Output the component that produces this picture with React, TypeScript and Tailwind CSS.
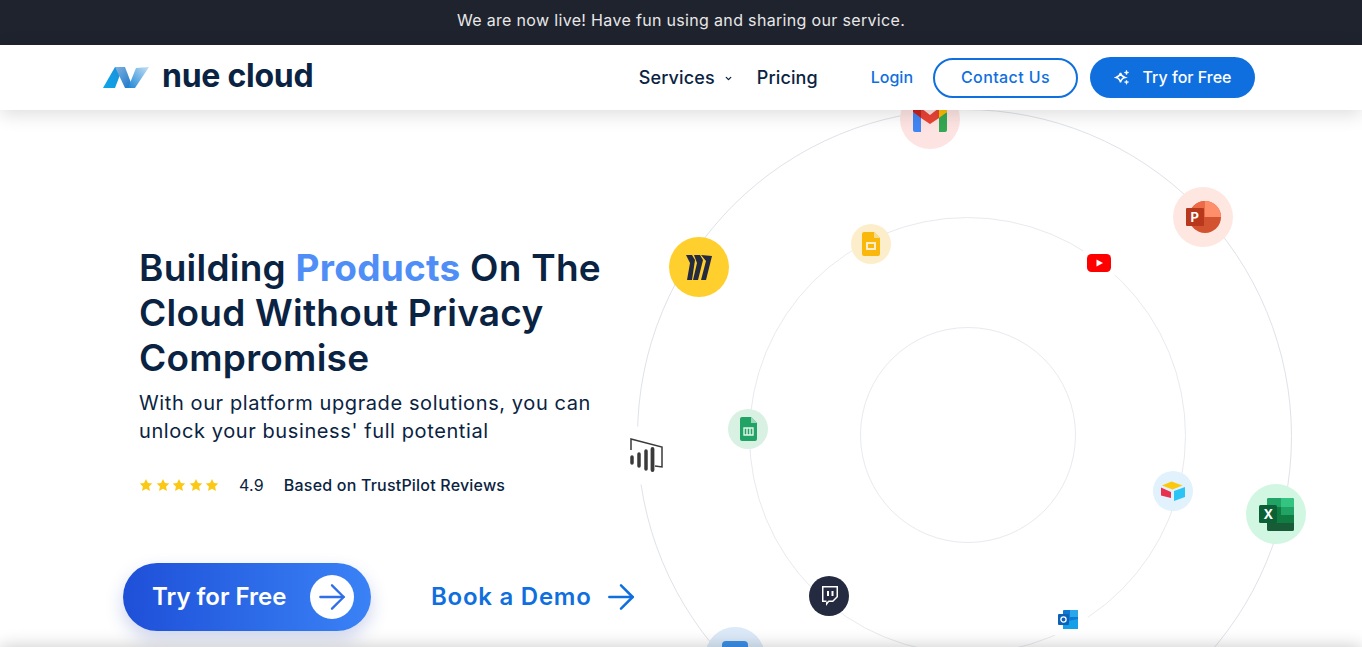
import { ArrowRight, ChevronDown } from 'lucide-react';

const FONT = "font-['Inter','Liberation_Sans',sans-serif]";

function LogoMark() {
  return (
    <svg width="46" height="22" viewBox="0 0 46 22">
      <defs>
        <linearGradient id="lm1" x1="0" y1="1" x2="1" y2="0">
          <stop offset="0" stopColor="#0ea5e9" />
          <stop offset="1" stopColor="#1b8fd8" />
        </linearGradient>
        <linearGradient id="lm2" x1="0" y1="0" x2="1" y2="1">
          <stop offset="0" stopColor="#7fb2e0" />
          <stop offset="1" stopColor="#1673c8" />
        </linearGradient>
        <linearGradient id="lm3" x1="0" y1="1" x2="1" y2="0">
          <stop offset="0" stopColor="#1c86d6" />
          <stop offset="1" stopColor="#c4e0f5" />
        </linearGradient>
      </defs>
      <path d="M0 21 L12 0 L20 0 L12 21 Z" fill="url(#lm1)" />
      <path d="M12 0 L22 0 L30 21 L22 21 Z" fill="url(#lm2)" />
      <path d="M25 21 L33 1 L46 0 L32 21 Z" fill="url(#lm3)" />
    </svg>
  );
}

function Sparkle() {
  return (
    <svg width="16" height="16" viewBox="0 0 16 16" fill="none" stroke="white" strokeWidth="1.5">
      <path d="M6.500 4 C7 6.500 8 7.500 11 8.500 C8 9.200 7 10.500 6.500 13.500 C6 10.500 5 9.200 2 8.500 C5 7.500 6 6.500 6.500 4 Z" />
      <path d="M12.500 1 L13.200 3 L15 3.500 L13.200 4.200 L12.500 6 L11.800 4.200 L10 3.500 L11.800 3 Z" fill="white" strokeWidth="0.4" />
      <path d="M12.500 11 L13.200 12.500 L14.800 13 L13.200 13.700 L12.500 15.500 L11.800 13.700 L10.200 13 L11.800 12.500 Z" fill="white" strokeWidth="0.4" />
    </svg>
  );
}

function Star() {
  return (
    <svg width="14" height="14" viewBox="0 0 24 24" fill="#fbc814">
      <path d="M12 1.500 L15.300 8.400 L22.800 9.400 L17.300 14.600 L18.700 22.100 L12 18.500 L5.300 22.100 L6.700 14.600 L1.200 9.400 L8.700 8.400 Z" />
    </svg>
  );
}

function Gmail() {
  return (
    <svg width="34" height="26" viewBox="0 0 34 26">
      <path d="M0 6 V24 a2 2 0 0 0 2 2 H8 V10 Z" fill="#4285f4" />
      <path d="M26 10 V26 H32 a2 2 0 0 0 2 -2 V6 Z" fill="#34a853" />
      <path d="M0 0 V6 L8 12 V2 Z" fill="#c5221f" />
      <path d="M8 2 L17 9 L26 2 V12 L17 18 L8 12 Z" fill="#ea4335" />
      <path d="M26 2 V12 L34 6 V0 Z" fill="#fbbc04" />
    </svg>
  );
}

function Slides() {
  return (
    <svg width="18" height="24" viewBox="0 0 18 24">
      <path d="M2 0 H12 L18 6 V22 a2 2 0 0 1 -2 2 H2 a2 2 0 0 1 -2 -2 V2 a2 2 0 0 1 2 -2 Z" fill="#fbb80c" />
      <path d="M12 0 L18 6 H12 Z" fill="#f8dc8e" />
      <rect x="5" y="11" width="8" height="6" fill="#fbb80c" stroke="#fdeecb" strokeWidth="2" />
    </svg>
  );
}

function Sheets() {
  return (
    <svg width="17" height="24" viewBox="0 0 17 24">
      <path d="M2 0 H11 L17 6 V22 a2 2 0 0 1 -2 2 H2 a2 2 0 0 1 -2 -2 V2 a2 2 0 0 1 2 -2 Z" fill="#21a366" />
      <path d="M11 0 L17 6 H11 Z" fill="#9ad9b8" />
      <path d="M4 11 H13 V18 H4 Z M7 11 V18 M10 11 V18" fill="none" stroke="#e3f5ea" strokeWidth="1.400" />
    </svg>
  );
}

function Miro() {
  return (
    <svg width="26" height="27" viewBox="0 0 26 27" fill="#242a40">
      <path d="M0 1 L6 1 L9 6 L6 26 L1 26 L4 9 Z" />
      <path d="M8 1 L14 1 L17 6 L12 26 L7 26 L11 9 Z" />
      <path d="M15 1 L26 2 L20 26 L15 26 L20 7 Z" />
    </svg>
  );
}

function PowerPoint() {
  return (
    <svg width="35" height="32" viewBox="0 0 35 32">
      <circle cx="19" cy="16" r="16" fill="#d35230" />
      <path d="M19 0 A16 16 0 0 1 35 16 H19 Z" fill="#ff8f6b" />
      <path d="M19 0 A16 16 0 0 0 3 16 H19 Z" fill="#ed6c47" />
      <rect x="0" y="7" width="18" height="18" rx="1" fill="#b7381a" />
      <text x="4.500" y="21" fontSize="13" fontWeight="700" fill="#fff" fontFamily="Inter, sans-serif">P</text>
    </svg>
  );
}

function YouTube() {
  return (
    <svg width="24" height="18" viewBox="0 0 24 18">
      <rect width="24" height="18" rx="4.500" fill="#ff0000" />
      <path d="M9.500 5.500 L16 9 L9.500 12.500 Z" fill="#fff" />
    </svg>
  );
}

function PowerBI() {
  return (
    <svg width="36" height="36" viewBox="0 0 36 36" fill="none">
      <path d="M2 13 V2 L33 10 V30 L26 29" stroke="#3a3a3a" strokeWidth="1.500" />
      <g stroke="#3a3a3a" strokeLinecap="round">
        <path d="M3 20 V26" strokeWidth="3.500" />
        <path d="M10 17 V29" strokeWidth="3.500" />
        <path d="M17 14 V32" strokeWidth="3.500" />
        <path d="M23.500 12 V33" strokeWidth="3.800" />
      </g>
    </svg>
  );
}

function Airtable() {
  return (
    <svg width="24" height="20" viewBox="0 0 24 20">
      <path d="M10.500 0.500 L21.500 4.500 L11.500 8.500 L1 4.500 Z" fill="#fcc80f" />
      <path d="M13 10 L24 6 V16 L13 20 Z" fill="#2cc4f4" />
      <path d="M0 6.500 L10 11 V17 L0 14.500 Z" fill="#e8304f" />
    </svg>
  );
}

function Excel() {
  return (
    <svg width="35" height="33" viewBox="0 0 35 33">
      <rect x="8" y="0" width="27" height="33" rx="2" fill="#107c41" />
      <path d="M8 2 a2 2 0 0 1 2 -2 H22 V9 H8 Z" fill="#21a366" />
      <path d="M22 0 H33 a2 2 0 0 1 2 2 V9 H22 Z" fill="#33c481" />
      <rect x="22" y="9" width="13" height="8" fill="#21a366" />
      <path d="M8 25 H35 V31 a2 2 0 0 1 -2 2 H10 a2 2 0 0 1 -2 -2 Z" fill="#185c37" />
      <rect x="0" y="7" width="18" height="18" rx="1.500" fill="#0b6135" />
      <text x="4.500" y="21" fontSize="13" fontWeight="700" fill="#fff" fontFamily="Inter, sans-serif">X</text>
    </svg>
  );
}

function Twitch() {
  return (
    <svg width="18" height="20" viewBox="0 0 18 20">
      <path d="M2 0 H18 V11 L13 16 H9 L6 20 V16 H2 Z" fill="#fff" />
      <path d="M3.500 1.500 H16.500 V10.500 L12.500 14.500 H8.500 L6.500 16.500 V14.500 H3.500 Z" fill="#242a40" />
      <path d="M8 5 V10 M12.500 5 V10" stroke="#fff" strokeWidth="2" />
    </svg>
  );
}

function Outlook() {
  return (
    <svg width="20" height="20" viewBox="0 0 20 20">
      <rect x="5" y="0" width="15" height="19" rx="1" fill="#0f78d4" />
      <rect x="12" y="0" width="8" height="7" fill="#28a8ea" />
      <path d="M5 12 L20 9 V19 H5 Z" fill="#14a0e8" />
      <rect x="0" y="4" width="11" height="11" rx="1" fill="#0b62b8" />
      <circle cx="5.500" cy="9.500" r="2.600" fill="none" stroke="#fff" strokeWidth="1.300" />
    </svg>
  );
}

function Badge({ className, children }: { className: string; children?: React.ReactNode }) {
  return (
    <div className={`absolute flex items-center justify-center rounded-full ${className}`}>
      {children}
    </div>
  );
}

function Orbit() {
  return (
    <div className="relative h-full flex-1">
      {/* rings */}
      <div className="absolute left-[17px] top-[-1px] h-[655px] w-[655px] rounded-full border border-[#dfe2e9]" />
      <div className="absolute left-[129px] top-[107px] h-[437px] w-[437px] rounded-full border border-[#e9eaef]" />
      <div className="absolute left-[240px] top-[217px] h-[216px] w-[216px] rounded-full border border-[#e9eaef]" />

      <Badge className="left-[280px] top-[-21px] h-[60px] w-[60px] bg-[#fde4e2]"><Gmail /></Badge>
      <Badge className="left-[553px] top-[77px] h-[60px] w-[60px] bg-[#fee7e1]"><PowerPoint /></Badge>
      <Badge className="left-[49px] top-[127px] h-[60px] w-[60px] bg-[#ffcf2d]"><Miro /></Badge>
      <Badge className="left-[231px] top-[114px] h-[40px] w-[40px] bg-[#fdeecb]"><Slides /></Badge>
      <Badge className="left-[459px] top-[133px] h-[40px] w-[40px] bg-white"><YouTube /></Badge>
      <Badge className="left-[108px] top-[299px] h-[40px] w-[40px] bg-[#d9f1e3]"><Sheets /></Badge>
      <Badge className="left-[-3px] top-[315px] h-[60px] w-[60px] bg-white"><PowerBI /></Badge>
      <Badge className="left-[533px] top-[361px] h-[40px] w-[40px] bg-[#e1f2fd]"><Airtable /></Badge>
      <Badge className="left-[626px] top-[374px] h-[60px] w-[60px] bg-[#d1f7e2]"><Excel /></Badge>
      <Badge className="left-[189px] top-[466px] h-[40px] w-[40px] bg-[#242a40]"><Twitch /></Badge>
      <Badge className="left-[428px] top-[490px] h-[40px] w-[40px] bg-white"><Outlook /></Badge>
      <Badge className="left-[85px] top-[517px] h-[60px] w-[60px] items-start bg-[#dbe9f8]">
        <div className="mt-[14px] h-[20px] w-[26px] rounded-sm bg-[#3b8fe8]" />
      </Badge>
    </div>
  );
}

export default function App() {
  return (
    <div className={`flex h-[647px] flex-col overflow-hidden bg-white ${FONT}`}>
      <div className="flex h-[45px] shrink-0 items-center justify-center bg-[#1f232e] pb-[5px] text-[16px] tracking-[0.33px] text-[#e8e8e8]">
        We are now live! Have fun using and sharing our service.
      </div>

      <header className="relative z-10 flex h-[65px] shrink-0 items-center bg-white pl-[103px] pr-[107px] shadow-[0_4px_18px_rgba(0,0,0,0.14)]">
        <LogoMark />
        <span className="mb-[4px] ml-[13px] text-[32px] font-bold leading-none tracking-[-0.25px] text-[#0a2342]">nue cloud</span>
        <nav className="ml-auto flex items-center text-[#0a2342]">
          <a className="text-[18px] font-medium tracking-[0.15px]">Services</a>
          <ChevronDown className="ml-[9px] mt-[1px] h-[9px] w-[9px]" strokeWidth={3.5} />
          <a className="ml-[24px] text-[18px] font-medium tracking-[0.1px]">Pricing</a>
          <a className="mb-[1px] ml-[53px] text-[16px] font-medium text-[#0f6fde]">Login</a>
          <a className="ml-[20px] flex h-[40px] w-[145px] items-center justify-center rounded-full border-2 border-[#0f6fde] pb-[1px] text-[16px] font-medium tracking-[0.4px] text-[#0f6fde]">
            Contact Us
          </a>
          <a className="ml-[12px] flex h-[41px] w-[165px] items-center justify-center gap-[13px] rounded-full bg-[#0f6fde] pb-[2px] text-[16px] font-medium text-white">
            <Sparkle />
            Try for Free
          </a>
        </nav>
      </header>

      <main className="flex h-[537px] shrink-0">
        <section className="w-[620px] shrink-0 pl-[139px] pt-[135px]">
          <h1 className="text-[37px] font-semibold leading-[45px] tracking-[0.25px] text-[#0a2342]">
            Building <span className="font-bold text-[#4f8ef7]">Products</span> On The
            <br />
            Cloud Without Privacy
            <br />
            Compromise
          </h1>
          <p className="mt-[9px] text-[20px] leading-[28px] tracking-[0.6px] text-[#0a2342]">
            With our platform upgrade solutions, you can
            <br />
            unlock your business' full potential
          </p>
          <div className="mt-7 flex h-[24px] items-center text-[16px] tracking-[0.2px] text-[#0a2342]">
            <div className="flex gap-[2.5px]">
              <Star />
              <Star />
              <Star />
              <Star />
              <Star />
            </div>
            <span className="ml-[20px]">4.9</span>
            <span className="ml-[20px] font-medium">Based on TrustPilot Reviews</span>
          </div>
          <div className="mt-[66px] flex items-center">
            <a className="-ml-4 flex h-[68px] w-[248px] shrink-0 items-center justify-between rounded-full bg-gradient-to-r from-[#1f4fd8] to-[#3b82f6] pl-[29px] pr-[17px] text-[24px] font-semibold whitespace-nowrap text-white shadow-[0_8px_18px_rgba(30,64,175,0.22)]">
              Try for Free
              <span className="flex h-[44px] w-[44px] items-center justify-center rounded-full bg-white">
                <ArrowRight className="h-[40px] w-[40px] text-[#2f6fe8]" strokeWidth={1.4} />
              </span>
            </a>
            <a className="ml-[60px] text-[24px] font-semibold tracking-[0.75px] whitespace-nowrap text-[#0f6fde]">Book a Demo</a>
            <ArrowRight className="ml-[9px] h-[40px] w-[40px] shrink-0 text-[#0f6fde]" strokeWidth={1.5} />
          </div>
        </section>
        <Orbit />
      </main>

      <div className="relative z-10 h-[40px] shrink-0 bg-white shadow-[0_0_18px_rgba(0,0,0,0.22)]" />
    </div>
  );
}
